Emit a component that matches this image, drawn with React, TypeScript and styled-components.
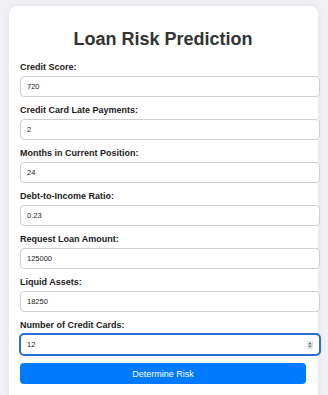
import React, { useState } from "react";
import styled, { createGlobalStyle } from "styled-components";

const GlobalStyle = createGlobalStyle`
  html, body {
    margin: 0;
    padding: 0;
    background: #f0f0f5;
    font-family: "Liberation Sans", Arial, Helvetica, sans-serif;
  }
  * {
    box-sizing: border-box;
  }
`;

const fields = [
  { id: "creditScore", label: "Credit Score:", value: "720" },
  { id: "latePayments", label: "Credit Card Late Payments:", value: "2" },
  { id: "monthsPosition", label: "Months in Current Position:", value: "24" },
  { id: "dti", label: "Debt-to-Income Ratio:", value: "0.23" },
  { id: "loanAmount", label: "Request Loan Amount:", value: "125000" },
  { id: "liquidAssets", label: "Liquid Assets:", value: "18250" },
  { id: "creditCards", label: "Number of Credit Cards:", value: "12", focused: true },
];

const SpinIcon = () => (
  <svg width="6" height="8" viewBox="0 0 6 8">
    <rect x="0" y="0" width="6" height="8" rx="1" fill="#e4e4e4" />
    <path d="M3 1.4 L4.6 3.3 L1.4 3.3 Z" fill="#555" />
    <path d="M3 6.6 L4.6 4.7 L1.4 4.7 Z" fill="#555" />
  </svg>
);

const App = () => {
  const [values, setValues] = useState<Record<string, string>>(
    Object.fromEntries(fields.map((f) => [f.id, f.value]))
  );

  return (
    <Page>
      <GlobalStyle />
      <Card>
        <Title>Loan Risk Prediction</Title>
        <form onSubmit={(e) => e.preventDefault()}>
          {fields.map((f) => (
            <Field key={f.id}>
              <Label htmlFor={f.id}>{f.label}</Label>
              <InputWrap>
                <Input
                  id={f.id}
                  type="number"
                  value={values[f.id]}
                  autoFocus={f.focused}
                  $focused={f.focused}
                  onChange={(e) => setValues({ ...values, [f.id]: e.target.value })}
                />
                {f.focused && (
                  <Spinner>
                    <SpinIcon />
                  </Spinner>
                )}
              </InputWrap>
            </Field>
          ))}
          <Button type="submit">Determine Risk</Button>
        </form>
      </Card>
    </Page>
  );
};

export default App;

const Page = styled.div`
  padding: 6px 10px 0 9px;
  min-height: 395px;
`;

const Card = styled.div`
  background: #fff;
  border-radius: 8px;
  box-shadow: 0 0 8px rgba(0, 0, 0, 0.06);
  padding: 11px 12px 20px 11px;
`;

const Title = styled.h1`
  margin: 12px 0 12px;
  font-size: 18px;
  line-height: 21px;
  font-weight: bold;
  color: #333;
  text-align: center;
`;

const Field = styled.div`
  margin-bottom: 8px;
`;

const Label = styled.label`
  display: block;
  margin-bottom: 4px;
  font-size: 9px;
  line-height: 10px;
  font-weight: bold;
  color: #1a1a1a;
`;

const InputWrap = styled.div`
  position: relative;
  width: 300px;
`;

const Input = styled.input<{ $focused?: boolean }>`
  display: block;
  width: 300px;
  height: 21px;
  padding: 0 6px;
  border: 1px solid #cfcfcf;
  border-radius: 4px;
  font-family: inherit;
  font-size: 7.5px;
  color: #222;
  background: #fff;
  -moz-appearance: textfield;

  &::-webkit-inner-spin-button,
  &::-webkit-outer-spin-button {
    -webkit-appearance: none;
    margin: 0;
  }

  &:focus {
    outline: 2px solid #2a6fdb;
    outline-offset: -1px;
  }
`;

const Spinner = styled.span`
  position: absolute;
  right: 7px;
  top: 7px;
  display: flex;
  pointer-events: none;
`;

const Button = styled.button`
  display: block;
  width: 100%;
  height: 21px;
  margin-top: 2px;
  border: none;
  border-radius: 4px;
  background: #007bff;
  color: #fff;
  font-family: inherit;
  font-size: 9px;
  cursor: pointer;
`;
